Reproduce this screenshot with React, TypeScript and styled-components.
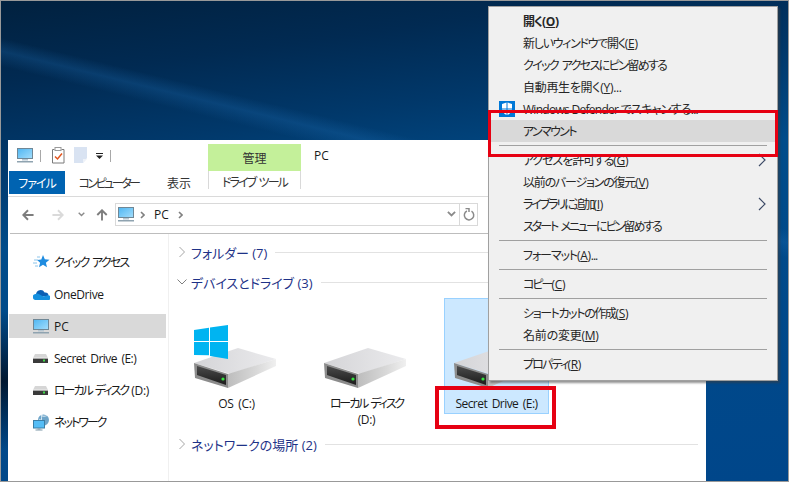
import React from "react";
import styled, { createGlobalStyle } from "styled-components";

const UI_FONT = `"Open Sans", "Noto Sans CJK JP", sans-serif`;

const GlobalStyle = createGlobalStyle`
  html, body {
    margin: 0;
    padding: 0;
    background: #fff;
    overflow: hidden;
  }
`;

// --- Icons ---

const MonitorIcon = () => (
  <svg width="16" height="15" viewBox="0 0 16 15">
    <defs>
      <linearGradient id="screen" x1="0" y1="0" x2="1" y2="1">
        <stop offset="0" stopColor="#4fb6f2" />
        <stop offset="1" stopColor="#a4defc" />
      </linearGradient>
    </defs>
    <rect x="0.5" y="0.5" width="15" height="10" fill="url(#screen)" stroke="#6f8796" />
    <rect x="5" y="11" width="6" height="1.5" fill="#b5c6d1" />
    <rect x="0" y="13" width="16" height="1.5" fill="#8fa3b0" />
  </svg>
);

const StarIcon = () => (
  <svg width="17" height="16" viewBox="0 0 17 16">
    <path d="M10 1l1.800 4.300 4.700.4-3.600 3 1.100 4.600-4-2.500-4 2.500 1.100-4.600-3-2.600 4.200-.7z" fill="#1f8ce0" />
    <path d="M1 6h4M0 9h4M2 12h3M4 3h3" stroke="#8cc4ea" strokeWidth="1" />
  </svg>
);

const CloudIcon = () => (
  <svg width="17" height="12" viewBox="0 0 17 12">
    <path d="M3 6.500a4.600 4.600 0 0 1 8.600-2 3.600 3.600 0 0 1 4 3.200L7 9z" fill="#0a5fb4" />
    <path d="M3 12a3 3 0 0 1-.4-6 3 3 0 0 1 3.600.2l4 2.200 4-1a2.400 2.400 0 0 1 1.800 4.600z" fill="#1490df" />
  </svg>
);

const SmallDriveIcon = () => (
  <svg width="15" height="9" viewBox="0 0 15 9">
    <path d="M2 0h11l2 4H0z" fill="#d6d6d6" />
    <rect x="0" y="4" width="15" height="5" fill="#3a3a3a" />
    <rect x="0" y="3.600" width="15" height="1" fill="#f2f2f2" />
    <rect x="10" y="5.500" width="2" height="2" fill="#3fdc4a" />
  </svg>
);

const NetworkIcon = () => (
  <svg width="17" height="17" viewBox="0 0 17 17">
    <circle cx="10.500" cy="6" r="5.500" fill="#6fa5c9" />
    <path d="M8 1.500c2 1 4 1 6 0M6 5c1 1 2 1 3 .5M9 .8c-1 3-.6 7 1 10" stroke="#d7e9f4" strokeWidth="1" fill="none" />
    <rect x="0.500" y="6.500" width="11" height="7.500" fill="#55bdf6" stroke="#3b7ea6" />
    <rect x="4.500" y="14.500" width="3" height="1" fill="#7d98a8" />
    <rect x="2.500" y="15.500" width="7" height="1" fill="#7d98a8" />
  </svg>
);

const ChecklistIcon = () => (
  <svg width="13" height="17" viewBox="0 0 13 17">
    <path d="M0.500 2.500h2M9.500 2.500h2.500v13.500H0.500V2.500" fill="#fff" stroke="#7a7a7a" />
    <rect x="3" y="0.500" width="6" height="3" fill="#fff" stroke="#9a9a9a" />
    <path d="M3 9.500l2.500 2.500L10 6.500" stroke="#e2551f" strokeWidth="1.500" fill="none" />
  </svg>
);

const BlankDocIcon = () => (
  <svg width="13" height="17" viewBox="0 0 13 17">
    <path d="M0 0h13v11l-4 5H0z" fill="#d9e3f2" />
    <path d="M9 16v-4h4z" fill="#eef2f8" />
  </svg>
);

const QuickDropdown = () => (
  <svg width="7" height="6" viewBox="0 0 7 6">
    <rect x="0" y="0" width="7" height="1" fill="#222" />
    <path d="M0 2.500h7L3.500 6z" fill="#222" />
  </svg>
);

const ArrowIcon = ({ dir, light }: { dir: "left" | "right" | "up"; light?: boolean }) => {
  const rotation = { left: 0, right: 180, up: 90 }[dir];
  return (
    <svg width="12" height="12" viewBox="0 0 14 14">
      <path
        d="M1.500 7h12M7 1.500L1.500 7 7 12.500"
        transform={`rotate(${rotation} 7 7)`}
        stroke={light ? "#dadada" : "#7d7d7d"}
        strokeWidth="2.200"
        fill="none"
      />
    </svg>
  );
};

const TinyChevronDown = ({ size = 7, color = "#8a8a8a" }: { size?: number; color?: string }) => (
  <svg width={size} height={size * 0.7} viewBox="0 0 10 7">
    <path d="M1 1l4 4 4-4" stroke={color} strokeWidth="2" fill="none" />
  </svg>
);

const TinyChevronRight = () => (
  <svg width="5" height="8" viewBox="0 0 5 8">
    <path d="M1 1l3 3-3 3" stroke="#808080" strokeWidth="1.600" fill="none" />
  </svg>
);

const RefreshIcon = () => (
  <svg width="12" height="13" viewBox="0 0 12 13">
    <path d="M8.500 3.200a4.700 4.700 0 1 1-4.600-.2" stroke="#8a8a8a" strokeWidth="1.500" fill="none" />
    <path d="M2.500 0.500h3.500v3.500" stroke="#8a8a8a" strokeWidth="1.500" fill="none" />
  </svg>
);

const GroupChevron = ({ open }: { open?: boolean }) => (
  <svg width="10" height="12" viewBox="0 0 10 12">
    {open ? (
      <path d="M0.500 3.500L5 8l4.500-4.500" stroke="#808080" strokeWidth="1" fill="none" />
    ) : (
      <path d="M2.500 1l5 5-5 5" stroke="#a6a6a6" strokeWidth="1" fill="none" />
    )}
  </svg>
);

const ShieldIcon = () => (
  <svg width="16" height="16" viewBox="0 0 16 16">
    <rect width="16" height="16" fill="#0078d7" />
    <path d="M3 3l4.500-1.500V7.500H3zM8.500 1.500L13 3v4.500H8.500zM3 8.500h4.500v5.500C5 13 3.500 11 3 8.500zM8.500 8.500H13c-.5 2.500-2 4.500-4.500 5.500z" fill="#fff" />
  </svg>
);

const SubmenuChevron = () => (
  <svg width="8" height="14" viewBox="0 0 8 14">
    <path d="M1 1l6 6-6 6" stroke="#3c4a66" strokeWidth="1.200" fill="none" />
  </svg>
);

const DriveIcon = ({ windows }: { windows?: boolean }) => (
  <svg width="84" height="64" viewBox="0 0 84 64">
    <defs>
      <linearGradient id="driveTop" x1="0" y1="0" x2="1" y2="0">
        <stop offset="0" stopColor="#d4d4d7" />
        <stop offset="1" stopColor="#ebebed" />
      </linearGradient>
      <linearGradient id="driveSide" x1="0" y1="0" x2="1" y2="0">
        <stop offset="0" stopColor="#bdbdbd" />
        <stop offset="0.600" stopColor="#d9d9d9" />
        <stop offset="1" stopColor="#f0f0f0" />
      </linearGradient>
      <linearGradient id="drivePanel" x1="0" y1="0" x2="0" y2="1">
        <stop offset="0" stopColor="#4a4a4a" />
        <stop offset="1" stopColor="#1c1c1c" />
      </linearGradient>
    </defs>
    <path d="M0 38L44 23l38 11-46 15z" fill="url(#driveTop)" />
    <path d="M34 49l48-15v7L34 63z" fill="url(#driveSide)" />
    <path d="M0 38l34 11v14L1 53z" fill="#8c8c8c" />
    <path d="M3 41l29 9v10L3 50z" fill="url(#drivePanel)" />
    <circle cx="29" cy="54" r="1.600" fill="#35e83f" />
    {windows && (
      <g fill="#00b4f1">
        <path d="M0 5l15-2.200V16H0z" />
        <path d="M16 2.600L34 0v16H16z" />
        <path d="M0 17h15v13.200L0 30z" />
        <path d="M16 17h18v17l-18-3z" />
      </g>
    )}
  </svg>
);

// --- Data ---

type MenuEntry =
  | { kind: "sep" }
  | {
      kind: "item";
      label: string;
      spacing: number;
      key?: string;
      tail?: string;
      bold?: boolean;
      hot?: boolean;
      sub?: boolean;
      shield?: boolean;
    };

const menuEntries: MenuEntry[] = [
  { kind: "item", label: "開く", key: "O", bold: true, spacing: -1 },
  { kind: "item", label: "新しいウィンドウで開く", key: "E", spacing: -1.28 },
  { kind: "item", label: "クイック アクセスにピン留めする", spacing: -1.62 },
  { kind: "item", label: "自動再生を開く", key: "Y", tail: "...", spacing: -0.3 },
  { kind: "item", label: "Windows Defender でスキャンする...", shield: true, spacing: -0.72 },
  { kind: "item", label: "アンマウント", hot: true, spacing: -1.67 },
  { kind: "sep" },
  { kind: "item", label: "アクセスを許可する", key: "G", sub: true, spacing: -1.1 },
  { kind: "item", label: "以前のバージョンの復元", key: "V", spacing: -1.2 },
  { kind: "item", label: "ライブラリに追加", key: "I", sub: true, spacing: -2.1 },
  { kind: "item", label: "スタート メニューにピン留めする", spacing: -2 },
  { kind: "sep" },
  { kind: "item", label: "フォーマット", key: "A", tail: "...", spacing: -1.1 },
  { kind: "sep" },
  { kind: "item", label: "コピー", key: "C", spacing: -2 },
  { kind: "sep" },
  { kind: "item", label: "ショートカットの作成", key: "S", spacing: -1.4 },
  { kind: "item", label: "名前の変更", key: "M", spacing: -0.2 },
  { kind: "sep" },
  { kind: "item", label: "プロパティ", key: "R", spacing: -1.8 },
];

const navItems = [
  { label: "クイック アクセス", icon: <StarIcon />, spacing: -1.75 },
  { label: "OneDrive", icon: <CloudIcon />, spacing: -0.4 },
  { label: "PC", icon: <MonitorIcon />, selected: true, spacing: 0 },
  { label: "Secret Drive (E:)", icon: <SmallDriveIcon />, spacing: -0.55 },
  { label: "ローカル ディスク ", suffix: "(D:)", icon: <SmallDriveIcon />, spacing: -2 },
  { label: "ネットワーク", icon: <NetworkIcon />, spacing: -2 },
];

// --- Component ---

const App: React.FC = () => (
  <>
    <GlobalStyle />
    <Desktop>
      <Explorer>
        <TitleRow>
          <QuickAccess>
            <MonitorIcon />
            <QuickSep />
            <ChecklistIcon />
            <BlankDocIcon />
            <QuickDropdown />
            <QuickSep />
          </QuickAccess>
          <ManageTab>管理</ManageTab>
          <WindowTitle>PC</WindowTitle>
        </TitleRow>

        <TabRow>
          <FileTab>ファイル</FileTab>
          <RibbonTab $width={87} $spacing={-2.5}>
            コンピューター
          </RibbonTab>
          <RibbonTab $width={54}>表示</RibbonTab>
          <DriveToolsTab>ドライブ ツール</DriveToolsTab>
        </TabRow>

        <AddressRow>
          <NavButtons>
            <ArrowIcon dir="left" />
            <ArrowIcon dir="right" light />
            <TinyChevronDown size={7} />
            <ArrowIcon dir="up" />
          </NavButtons>
          <AddressBox>
            <MonitorIcon />
            <TinyChevronRight />
            <Crumb>PC</Crumb>
            <TinyChevronRight />
            <AddressEnd>
              <TinyChevronDown size={9} />
              <RefreshCell>
                <RefreshIcon />
              </RefreshCell>
            </AddressEnd>
          </AddressBox>
        </AddressRow>

        <Body>
          <Sidebar>
            {navItems.map((item) => (
              <NavRow key={item.label} $selected={item.selected} $spacing={item.spacing}>
                <NavIcon>{item.icon}</NavIcon>
                {item.label}
                {item.suffix && <LatinRun>{item.suffix}</LatinRun>}
              </NavRow>
            ))}
          </Sidebar>

          <Content>
            <GroupHeader>
              <GroupChevron />
              <GroupTitle>フォルダー (7)</GroupTitle>
              <GroupLine />
            </GroupHeader>
            <GroupHeader $gap={12}>
              <GroupChevron open />
              <GroupTitle>デバイスとドライブ (3)</GroupTitle>
              <GroupLine />
            </GroupHeader>
            <Tiles>
              <Tile>
                <DriveIcon windows />
                <TileLabel $spacing={-0.3}>OS (C:)</TileLabel>
              </Tile>
              <Tile>
                <DriveIcon />
                <TileLabel $spacing={-2.1}>
                  ローカル ディスク
                  <br />
                  <LatinRun>(D:)</LatinRun>
                </TileLabel>
              </Tile>
              <Tile $selected>
                <DriveIcon />
                <TileLabel $spacing={-0.55}>Secret Drive (E:)</TileLabel>
              </Tile>
            </Tiles>
            <GroupHeader $gap={5}>
              <GroupChevron />
              <GroupTitle>ネットワークの場所 (2)</GroupTitle>
              <GroupLine />
            </GroupHeader>
          </Content>
        </Body>
      </Explorer>

      <ContextMenu>
        {menuEntries.map((entry, i) =>
          entry.kind === "sep" ? (
            <MenuSep key={i} />
          ) : (
            <MenuItem
              key={i}
              $bold={entry.bold}
              $hot={entry.hot}
              $spacing={entry.spacing}
              $wordGap={entry.shield ? 0 : 2}
            >
              {entry.shield && (
                <ShieldSlot>
                  <ShieldIcon />
                </ShieldSlot>
              )}
              {entry.label}
              {entry.key && (
                <LatinRun>
                  (<u>{entry.key}</u>)
                </LatinRun>
              )}
              {entry.tail}
              {entry.sub && (
                <SubArrow>
                  <SubmenuChevron />
                </SubArrow>
              )}
            </MenuItem>
          )
        )}
      </ContextMenu>

      <MenuHighlight />
      <TileHighlight />
    </Desktop>
  </>
);

// --- Styles ---

const Desktop = styled.div`
  position: relative;
  width: 789px;
  height: 482px;
  box-sizing: border-box;
  padding: 139px 0 0 7px;
  border: 1px solid #999;
  overflow: hidden;
  font-family: ${UI_FONT};
  font-size: 12px;
  font-feature-settings: "palt";
  word-spacing: 2px;
  color: #1a1a1a;
  background:
    linear-gradient(193.7deg, transparent 222px, rgba(30, 110, 180, 0.28) 235px, transparent 250px),
    radial-gradient(ellipse 240px 70px at 0 380px, rgba(0, 10, 25, 0.8), transparent),
    linear-gradient(172deg, #01213f 0%, #012a52 14%, #01386a 27%, #014c8a 42%, #00468a 100%);
`;

const Explorer = styled.div`
  width: 698px;
  height: 341px;
  display: flex;
  flex-direction: column;
  background: #fff;
`;

const TitleRow = styled.div`
  height: 31px;
  display: flex;
  align-items: flex-end;
`;

const QuickAccess = styled.div`
  width: 200px;
  height: 27px;
  box-sizing: border-box;
  padding: 0 0 4px 9px;
  display: flex;
  align-items: center;
  gap: 9px;
`;

const QuickSep = styled.span`
  width: 1px;
  height: 12px;
  margin: 0 2px 0 -2px;
  background: #a8a8a8;
`;

const ManageTab = styled.div`
  width: 93px;
  height: 27px;
  display: flex;
  align-items: center;
  justify-content: center;
  background: #c4f09a;
  color: #333;
`;

const WindowTitle = styled.div`
  align-self: center;
  margin-left: 13px;
  margin-top: -1px;
`;

const TabRow = styled.div`
  height: 25px;
  display: flex;
  align-items: flex-start;
  border-bottom: 1px solid #dadada;
`;

const FileTab = styled.div`
  margin-left: 1px;
  width: 56px;
  height: 23px;
  display: flex;
  align-items: center;
  justify-content: center;
  background: #0063b1;
  color: #fff;
  letter-spacing: -1px;
`;

const RibbonTab = styled.div<{ $width: number; $spacing?: number }>`
  width: ${({ $width }) => $width}px;
  height: 23px;
  display: flex;
  align-items: center;
  justify-content: center;
  color: #333;
  letter-spacing: ${({ $spacing }) => $spacing ?? 0}px;
`;

const DriveToolsTab = styled.div`
  margin-left: 2px;
  width: 93px;
  height: 18px;
  box-sizing: border-box;
  padding-top: 3px;
  display: flex;
  align-items: center;
  justify-content: center;
  border-left: 1px solid #d9d9d9;
  border-right: 1px solid #d9d9d9;
  color: #333;
  letter-spacing: -1.9px;
`;

const AddressRow = styled.div`
  height: 37px;
  margin-left: 2px;
  box-sizing: border-box;
  padding-top: 6px;
  display: flex;
  align-items: flex-start;
  border-bottom: 1px solid #bdbdbd;
`;

const NavButtons = styled.div`
  width: 105px;
  height: 23px;
  box-sizing: border-box;
  padding-left: 12px;
  display: flex;
  align-items: center;
  gap: 18px;

  & > svg:nth-child(3) {
    margin-left: -4px;
  }

  & > svg:nth-child(4) {
    margin-left: -7px;
  }
`;

const AddressBox = styled.div`
  width: 363px;
  height: 23px;
  box-sizing: border-box;
  padding-left: 2px;
  display: flex;
  align-items: center;
  gap: 6px;
  border: 1px solid #d9d9d9;
`;

const Crumb = styled.span`
  margin: 0 3px 0 3px;
`;

const AddressEnd = styled.div`
  margin-left: auto;
  height: 100%;
  display: flex;
  align-items: center;
  gap: 3px;
`;

const RefreshCell = styled.div`
  width: 17px;
  height: 100%;
  display: flex;
  align-items: center;
  justify-content: center;
  border-left: 1px solid #d9d9d9;
`;

const Body = styled.div`
  flex: 1;
  display: flex;
  min-height: 0;
`;

const Sidebar = styled.nav`
  width: 161px;
  box-sizing: border-box;
  padding-top: 16px;
  display: flex;
  flex-direction: column;
  gap: 8px;
  border-right: 1px solid #f0f0f0;
`;

const NavRow = styled.div<{ $selected?: boolean; $spacing: number }>`
  width: 157px;
  height: 24px;
  margin-left: 1px;
  box-sizing: border-box;
  padding-left: 24px;
  display: flex;
  align-items: center;
  background: ${({ $selected }) => ($selected ? "#d9d9d9" : "transparent")};
  letter-spacing: ${({ $spacing }) => $spacing}px;
  white-space: pre;
`;

const NavIcon = styled.span`
  width: 21px;
  flex: none;
  display: flex;
  align-items: center;
`;

const Content = styled.main`
  flex: 1;
  box-sizing: border-box;
  padding: 9px 8px 0;
`;

const GroupHeader = styled.div<{ $gap?: number }>`
  height: 18px;
  margin-top: ${({ $gap }) => $gap ?? 0}px;
  display: flex;
  align-items: center;
`;

const GroupTitle = styled.span`
  margin-left: 4px;
  color: #1e3287;
  font-size: 13px;
  word-spacing: 0;
  white-space: nowrap;
`;

const GroupLine = styled.span`
  flex: 1;
  height: 1px;
  margin-left: 8px;
  background: #e2e2e2;
`;

const Tiles = styled.div`
  margin: 7px 0 0 7px;
  display: flex;
  align-items: flex-start;
  gap: 25px;
`;

const Tile = styled.div<{ $selected?: boolean }>`
  width: 105px;
  box-sizing: border-box;
  padding: 27px 1px 1px;
  display: flex;
  flex-direction: column;
  align-items: center;
  border: 1px solid ${({ $selected }) => ($selected ? "#99d1ff" : "transparent")};
  background: ${({ $selected }) => ($selected ? "#cce8ff" : "transparent")};

  & > svg {
    align-self: flex-start;
    margin: -1px 0 0 8px;
  }
`;

const TileLabel = styled.div<{ $spacing?: number }>`
  margin-top: 7px;
  line-height: 16px;
  text-align: center;
  white-space: pre;
  letter-spacing: ${({ $spacing }) => $spacing ?? 0}px;
`;

const ContextMenu = styled.div`
  position: absolute;
  left: 487px;
  top: 5px;
  width: 290px;
  height: 375px;
  box-sizing: border-box;
  padding: 3px 2px;
  background: #f0f0f0;
  border: 1px solid #a0a0a0;
  box-shadow: 2px 2px 2px rgba(60, 60, 60, 0.55);
`;

const MenuItem = styled.div<{ $bold?: boolean; $hot?: boolean; $spacing: number; $wordGap: number }>`
  position: relative;
  height: 22px;
  padding-left: 32px;
  display: flex;
  align-items: center;
  white-space: pre;
  font-weight: ${({ $bold }) => ($bold ? 700 : 400)};
  background: ${({ $hot }) => ($hot ? "#d9d9d9" : "transparent")};
  color: #262626;
  letter-spacing: ${({ $spacing }) => $spacing}px;
  word-spacing: ${({ $wordGap }) => $wordGap}px;
`;

const LatinRun = styled.span`
  letter-spacing: -0.3px;
`;

const ShieldSlot = styled.span`
  position: absolute;
  left: 8px;
  top: 3px;
  display: flex;
`;

const SubArrow = styled.span`
  position: absolute;
  right: 9px;
  top: 4px;
  display: flex;
`;

const MenuSep = styled.div`
  height: 1px;
  margin: 3px 8px;
  background: #a0a0a0;
`;

const MenuHighlight = styled.div`
  position: absolute;
  left: 487px;
  top: 109px;
  width: 290px;
  height: 47px;
  box-sizing: border-box;
  border: 3px solid #e60012;
`;

const TileHighlight = styled.div`
  position: absolute;
  left: 434px;
  top: 385px;
  width: 121px;
  height: 43px;
  box-sizing: border-box;
  border: 4px solid #e60012;
`;

export default App;
